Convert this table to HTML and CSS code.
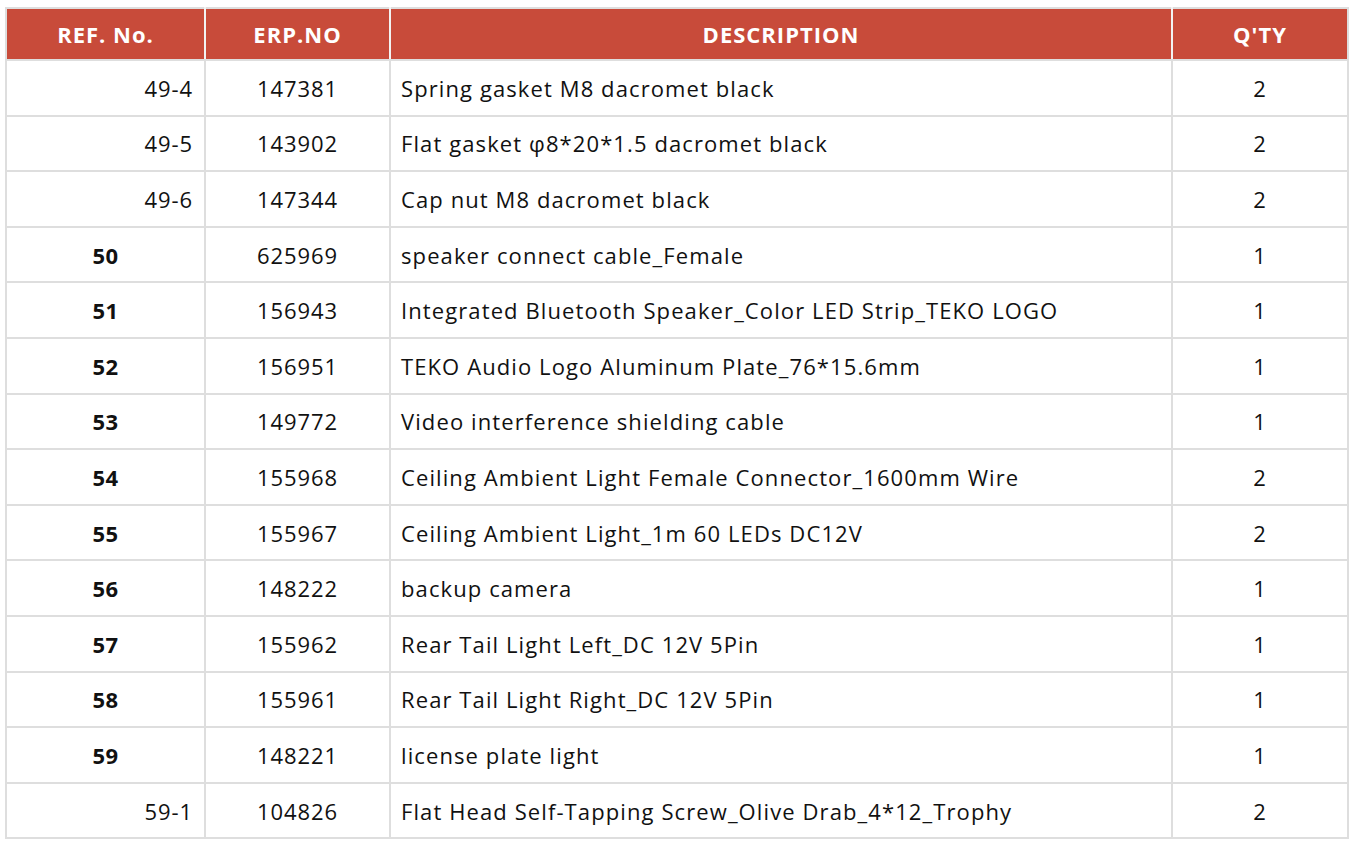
FILE: index.html
```html
<!DOCTYPE html>
<html>
<head>
<meta charset="utf-8">
<link rel="stylesheet" href="styles.css">
</head>
<body>
<table class="parts">
  <colgroup>
    <col class="c-ref"><col class="c-erp"><col class="c-desc"><col class="c-qty">
  </colgroup>
  <thead>
    <tr><th>REF. No.</th><th>ERP.NO</th><th>DESCRIPTION</th><th>Q'TY</th></tr>
  </thead>
  <tbody>
    <tr><td class="sub">49-4</td><td class="erp">147381</td><td class="desc">Spring gasket M8 dacromet black</td><td class="qty">2</td></tr>
    <tr><td class="sub">49-5</td><td class="erp">143902</td><td class="desc">Flat gasket φ8*20*1.5 dacromet black</td><td class="qty">2</td></tr>
    <tr><td class="sub">49-6</td><td class="erp">147344</td><td class="desc">Cap nut M8 dacromet black</td><td class="qty">2</td></tr>
    <tr><td class="main">50</td><td class="erp">625969</td><td class="desc">speaker connect cable_Female</td><td class="qty">1</td></tr>
    <tr><td class="main">51</td><td class="erp">156943</td><td class="desc">Integrated Bluetooth Speaker_Color LED Strip_TEKO LOGO</td><td class="qty">1</td></tr>
    <tr><td class="main">52</td><td class="erp">156951</td><td class="desc">TEKO Audio Logo Aluminum Plate_76*15.6mm</td><td class="qty">1</td></tr>
    <tr><td class="main">53</td><td class="erp">149772</td><td class="desc">Video interference shielding cable</td><td class="qty">1</td></tr>
    <tr><td class="main">54</td><td class="erp">155968</td><td class="desc">Ceiling Ambient Light Female Connector_1600mm Wire</td><td class="qty">2</td></tr>
    <tr><td class="main">55</td><td class="erp">155967</td><td class="desc">Ceiling Ambient Light_1m 60 LEDs DC12V</td><td class="qty">2</td></tr>
    <tr><td class="main">56</td><td class="erp">148222</td><td class="desc">backup camera</td><td class="qty">1</td></tr>
    <tr><td class="main">57</td><td class="erp">155962</td><td class="desc">Rear Tail Light Left_DC 12V 5Pin</td><td class="qty">1</td></tr>
    <tr><td class="main">58</td><td class="erp">155961</td><td class="desc">Rear Tail Light Right_DC 12V 5Pin</td><td class="qty">1</td></tr>
    <tr><td class="main">59</td><td class="erp">148221</td><td class="desc">license plate light</td><td class="qty">1</td></tr>
    <tr><td class="sub">59-1</td><td class="erp">104826</td><td class="desc">Flat Head Self-Tapping Screw_Olive Drab_4*12_Trophy</td><td class="qty">2</td></tr>
  </tbody>
</table>
</body>
</html>
```
FILE: styles.css
```css
html, body {
  margin: 0;
  padding: 0;
  background: #ffffff;
}
body {
  padding: 7px 0 0 5px;
  font-family: "Open Sans", "Noto Sans", sans-serif;
  color: #111111;
}
.parts {
  border-collapse: collapse;
  table-layout: fixed;
  width: 1342px;
  border: 2px solid #dedede;
}
.c-ref { width: 199px; }
.c-erp { width: 185px; }
.c-desc { width: 782px; }
.c-qty { width: 176px; }
.parts th {
  background: #c84b3a;
  color: #ffffff;
  font-weight: 700;
  font-size: 22px;
  letter-spacing: 1px;
  height: 50px;
  padding: 0;
  text-align: center;
  border-left: 2px solid #f3f3f3;
  border-right: 2px solid #f3f3f3;
  border-bottom: 2px solid #dedede;
}
.parts th:first-child { border-left: 2px solid #dedede; }
.parts th:last-child { border-right: 2px solid #dedede; }
.parts td {
  height: 53.6px;
  padding: 0 10px 0 12px;
  font-size: 22px;
  letter-spacing: 0.9px;
  border: 2px solid #dedede;
  white-space: nowrap;
}
.parts td.main {
  text-align: center;
  font-weight: 700;
  letter-spacing: 0.3px;
  padding: 0;
}
.parts td.sub { text-align: right; padding-right: 11px; }
.parts td.erp, .parts td.qty { text-align: center; padding: 0; }
.parts td.desc { text-align: left; padding-left: 10px; letter-spacing: 1.1px; }
```
